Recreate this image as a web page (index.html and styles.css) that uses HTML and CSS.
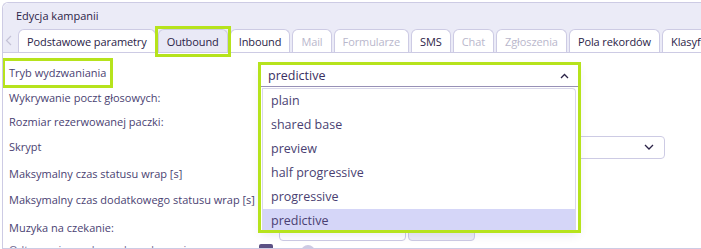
FILE: index.html
```html
<!DOCTYPE html>
<html lang="pl">
<head>
<meta charset="utf-8">
<title>Edycja kampanii</title>
<link rel="stylesheet" href="styles.css">
</head>
<body>
<div class="panel">
  <div class="header">
    <div class="title">Edycja kampanii</div>
    <div class="tabs">
      <span class="arrow"><svg width="7" height="11" viewBox="0 0 7 11"><polyline points="6,1 1.5,5.5 6,10" fill="none" stroke="#c4c2d6" stroke-width="1.2"/></svg></span>
      <span class="tab">Podstawowe parametry</span>
      <span class="tab tab-active hl-tab">Outbound</span>
      <span class="tab">Inbound</span>
      <span class="tab tab-off">Mail</span>
      <span class="tab tab-off">Formularze</span>
      <span class="tab">SMS</span>
      <span class="tab tab-off">Chat</span>
      <span class="tab tab-off">Zgłoszenia</span>
      <span class="tab">Pola rekordów</span>
      <span class="tab">Klasyfikacje</span>
    </div>
  </div>
  <div class="form">
    <div class="label"><span class="hl">Tryb wydzwaniania</span></div>
    <div class="field">
      <div class="combo">
        <div class="combo-head">
          <span>predictive</span>
          <svg width="9" height="6" viewBox="0 0 9 6"><polyline points="1,5 4.5,1.5 8,5" fill="none" stroke="#2b2347" stroke-width="1.3"/></svg>
        </div>
        <ul class="combo-list">
          <li>plain</li>
          <li>shared base</li>
          <li>preview</li>
          <li>half progressive</li>
          <li>progressive</li>
          <li class="sel">predictive</li>
        </ul>
      </div>
    </div>

    <div class="label"><span>Wykrywanie poczt głosowych:</span></div>
    <div class="field"></div>

    <div class="label"><span>Rozmiar rezerwowanej paczki:</span></div>
    <div class="field"></div>

    <div class="label"><span>Skrypt</span></div>
    <div class="field">
      <div class="select">
        <svg width="10" height="6" viewBox="0 0 10 6"><polyline points="1,1 5,5 9,1" fill="none" stroke="#2b2347" stroke-width="1.3"/></svg>
      </div>
    </div>

    <div class="label"><span>Maksymalny czas statusu wrap [s]</span></div>
    <div class="field"></div>

    <div class="label"><span>Maksymalny czas dodatkowego statusu wrap [s]</span></div>
    <div class="field"></div>

    <div class="label"><span>Muzyka na czekanie:</span></div>
    <div class="field field-inputs">
      <div class="input"></div>
      <div class="input input-btn"></div>
    </div>

    <div class="label label-cut"><span>Odtwarzaj muzykę podczas łączenia</span></div>
    <div class="field field-toggles">
      <span class="check"></span>
      <span class="dot"></span>
    </div>
  </div>
</div>
</body>
</html>
```

FILE: styles.css
```css
* { box-sizing: border-box; }
html, body { margin: 0; padding: 0; background: #ffffff; overflow: hidden; }
body {
  font-family: "Open Sans", "Liberation Sans", sans-serif;
  font-size: 11px;
  color: #2b2347;
  height: 249px;
}
.panel {
  margin: 2px 0 0 2px;
  border: 1px solid #cdcbe4;
  border-right: none;
  border-radius: 6px 0 0 0;
  height: 247px;
  overflow: hidden;
}
.header {
  background: #ebebf7;
  border-bottom: 1px solid #cdcbe4;
  border-radius: 6px 0 0 0;
}
.title {
  height: 26px;
  padding: 4px 0 0 13px;
  font-weight: 500;
  line-height: 18px;
}
.tabs {
  display: flex;
  align-items: flex-end;
  gap: 2px;
  height: 23px;
  white-space: nowrap;
}
.arrow {
  width: 13px;
  height: 23px;
  display: flex;
  align-items: center;
  padding-left: 2px;
  flex-shrink: 0;
}
.tab {
  height: 23px;
  display: flex;
  align-items: center;
  padding: 0 8px;
  background: #ffffff;
  border: 1px solid #cdcbe4;
  border-bottom: none;
  border-radius: 6px 6px 0 0;
  font-weight: 500;
  letter-spacing: -0.1px;
  color: #2b2347;
  flex-shrink: 0;
}
.tab-active { background: #e9e9f6; }
.tab-off { color: #b9b7cc; }

.hl, .hl-tab { position: relative; }
.hl::after, .hl-tab::after {
  content: "";
  position: absolute;
  border: 3px solid #b6e31c;
  pointer-events: none;
  z-index: 3;
}
.hl::after { inset: -3px; }
.hl-tab::after { top: -4px; left: -4px; right: -4px; bottom: -5px; }

.form {
  display: grid;
  grid-template-columns: 253px 1fr;
  grid-template-rows: 24px 25px 23px 28px 26px 26px 30px 14px;
  padding: 8px 0 0 2px;
  color: #4a3f72;
}
.label {
  display: flex;
  align-items: center;
  white-space: nowrap;
}
.label span {
  display: block;
  padding: 0 4px;
  height: 24px;
  line-height: 24px;
}
.label-cut { align-items: flex-start; }
.label-cut span { color: #6f6690; height: 14px; line-height: 14px; }
.field {
  position: relative;
  display: flex;
  align-items: center;
}
.combo {
  position: absolute;
  left: 3px;
  top: 4px;
  width: 317px;
  height: 165px;
  background: #ffffff;
  outline: 3px solid #b6e31c;
  z-index: 5;
  box-shadow: 0 4px 10px rgba(60, 50, 110, 0.12);
  display: flex;
  flex-direction: column;
}
.combo-head {
  height: 22px;
  flex-shrink: 0;
  display: flex;
  align-items: center;
  justify-content: space-between;
  padding: 0 9px 0 7px;
  border-bottom: 1px solid #9790b6;
  font-size: 12.5px;
  color: #3a2f62;
}
.combo-list {
  list-style: none;
  margin: 1px 2px 0 1px;
  padding: 0;
  flex: 1;
  overflow: hidden;
  border: 1px solid #d9d7ea;
  border-bottom: none;
  border-radius: 0 4px 0 0;
}
.combo-list li {
  height: 24px;
  line-height: 24px;
  padding-left: 8px;
  font-size: 12.5px;
  color: #4a3f72;
}
.combo-list li.sel { background: #d5d6f8; }

.select {
  margin-left: 4px;
  width: 403px;
  height: 23px;
  border: 1px solid #cdcbe4;
  border-radius: 4px;
  display: flex;
  align-items: center;
  justify-content: flex-end;
  padding-right: 10px;
}
.field-inputs { gap: 2px; padding-left: 21px; }
.input {
  width: 127px;
  height: 22px;
  border: 1px solid #cdcbe4;
  border-radius: 4px;
  margin-top: 3px;
}
.input-btn { width: 67px; background: #ececf6; }
.field-toggles { align-items: flex-start; gap: 28px; padding-left: 1px; }
.check {
  width: 14px;
  height: 14px;
  margin-top: 1px;
  background: #5b5184;
  border-radius: 2px;
}
.dot {
  width: 14px;
  height: 14px;
  margin-top: 2px;
  background: #cdcbe4;
  border-radius: 50%;
}
```
